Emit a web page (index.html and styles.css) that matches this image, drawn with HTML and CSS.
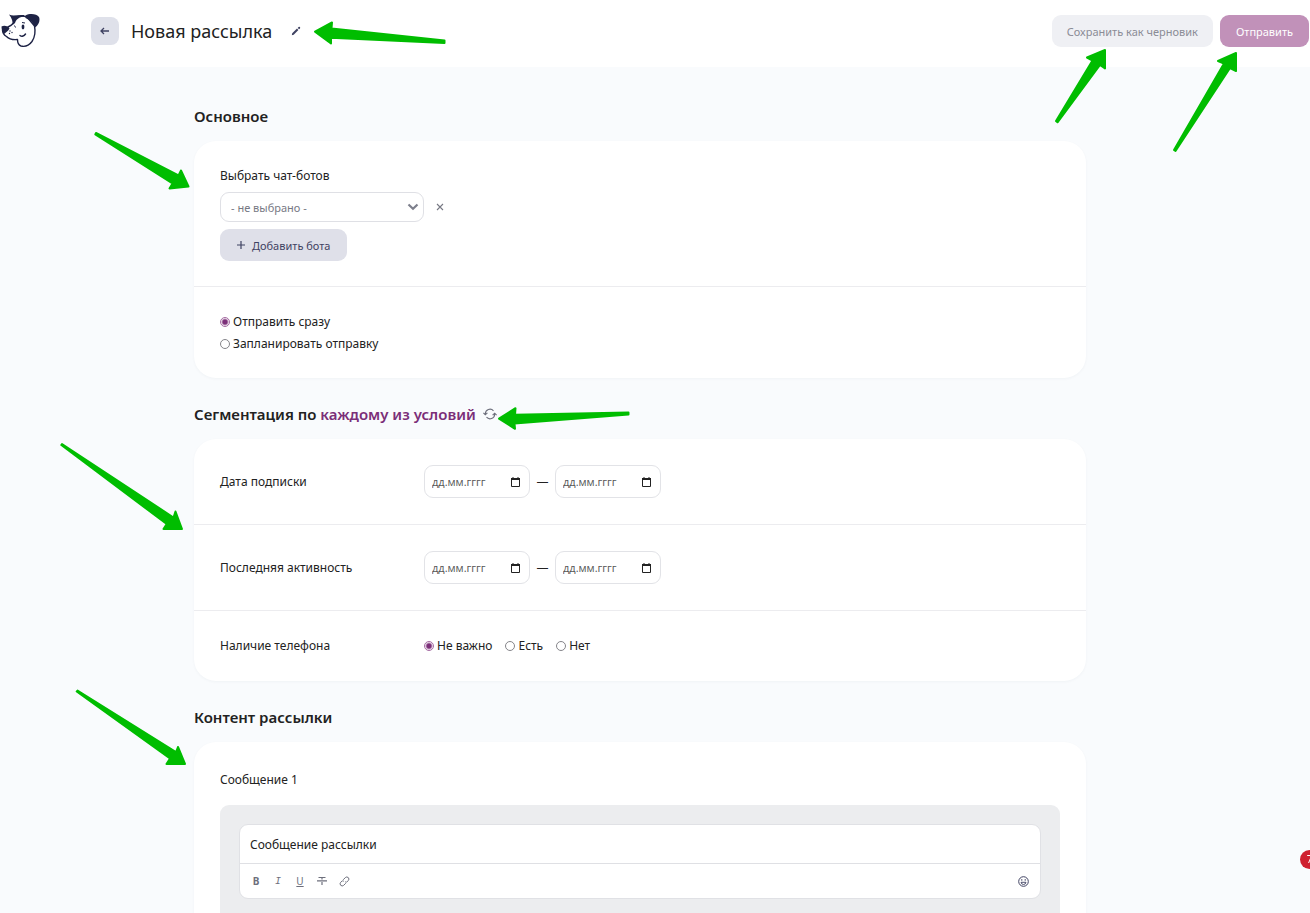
FILE: index.html
```html
<!DOCTYPE html>
<html lang="ru">
<head>
<meta charset="utf-8">
<meta name="viewport" content="width=device-width, initial-scale=1">
<title>Новая рассылка</title>
<link rel="stylesheet" href="styles.css">
</head>
<body>
<header class="header">
  <a href="#" class="logo" aria-label="На главную">
    <svg width="40" height="36" viewBox="0 0 40 36">
      <path d="M14 5 C18 3 23 2.500 27 4 L34.500 13 C35.500 18 35 24 32 28.500 C29 32.500 25 34 21 33 C18 32 17.500 30 17.500 26.500 C13 27 9 26 6.500 23.500 C4 22 2.500 20 2.500 17 L8 14 C10 13 12 12 13.500 10 Z" fill="#fff" stroke="#1e2345" stroke-width="1.4" stroke-linejoin="round"/>
      <path d="M9 1.500 C13 3.500 18 1.500 24 2 L24 3.500 C19 4 16 6.500 15 10 L12.500 12 C13 9 12 5 9 1.500 Z" fill="#1e2345"/>
      <path d="M25.500 2.500 C30 0 37 1 39 4 C40.500 8 38.500 12 35 14.500 C33.500 10 30.500 7 25.500 5 Z" fill="#1e2345"/>
      <path d="M1.500 13.500 C4 12 8.500 13 9.500 15.500 C8 18.500 5.500 19.500 4 21 C2.500 19.500 1.500 16.500 1.500 13.500 Z" fill="#1e2345"/>
      <ellipse cx="23" cy="14" rx="1.400" ry="2.400" fill="#1e2345"/>
      <path d="M22 9.500 L25 10 M14.500 12.500 L15.500 14.500" stroke="#1e2345" fill="none"/>
      <path d="M20 22.500 C22 24 24 23 25.500 21" stroke="#1e2345" stroke-width="1.5" fill="none" stroke-linecap="round"/>
      <circle cx="10" cy="18" r=".7" fill="#1e2345"/>
      <circle cx="12" cy="19.500" r=".7" fill="#1e2345"/>
      <circle cx="9.500" cy="20.500" r=".7" fill="#1e2345"/>
    </svg>
  </a>
  <button type="button" class="back" aria-label="Назад">
    <svg width="10" height="8" viewBox="0 0 10 8"><path d="M9 4 H1 M4 1 L1 4 L4 7" fill="none" stroke="#3f4262" stroke-width="1.3"/></svg>
  </button>
  <h1 class="title">Новая рассылка</h1>
  <button type="button" class="icon-btn edit" aria-label="Переименовать">
    <svg width="10" height="10" viewBox="0 0 10 10"><path d="M.8 9.200 L1.200 7.300 L6 2.600 L7.400 4 L2.700 8.700 Z M6.700 1.900 L7.600 1 Q8.300 .5 8.900 1.100 Q9.500 1.700 9 2.400 L8.100 3.300 Z" fill="#3f4262"/></svg>
  </button>
  <div class="header-right">
    <button type="button" class="btn draft">Сохранить как черновик</button>
    <button type="button" class="btn send">Отправить</button>
  </div>
</header>

<main class="main">
  <div class="container">

    <h2 class="heading">Основное</h2>
    <section class="card">
      <div class="card-part">
        <label class="label" for="bot">Выбрать чат-ботов</label>
        <div class="bot-row">
          <div class="select-wrap">
            <select id="bot" class="select">
              <option>- не выбрано -</option>
            </select>
            <svg class="chevron" width="12" height="8" viewBox="0 0 12 8"><path d="M1.500 1.500 L6 5.700 L10.500 1.500" fill="none" stroke="#7d7f8c" stroke-width="2.200"/></svg>
          </div>
          <button type="button" class="icon-btn" aria-label="Удалить">
            <svg width="8" height="8" viewBox="0 0 8 8"><path d="M1 1 L7 7 M7 1 L1 7" stroke="#777984" stroke-width="1.1"/></svg>
          </button>
        </div>
        <button type="button" class="btn add">
          <svg width="8" height="8" viewBox="0 0 8 8"><path d="M4 0 V8 M0 4 H8" stroke="#3f4262" stroke-width="1.2"/></svg>
          Добавить бота
        </button>
      </div>
      <div class="card-part when">
        <label class="radio"><input type="radio" name="when" checked>Отправить сразу</label>
        <label class="radio"><input type="radio" name="when">Запланировать отправку</label>
      </div>
    </section>

    <h2 class="heading">Сегментация по <a href="#" class="mode">каждому из условий</a>
      <svg class="refresh" width="14" height="12" viewBox="0 0 14 12"><path d="M2.300 6.500 V5.800 A4.700 4.700 0 0 1 10.500 2.800 M11.700 5.500 V6.200 A4.700 4.700 0 0 1 3.500 9.200 M.4 4.800 L2.300 6.800 L4.400 4.800 M9.600 7.200 L11.700 5.200 L13.600 7.200" fill="none" stroke="#6d6f7c" stroke-width="1.1"/></svg>
    </h2>
    <section class="card">
      <div class="row">
        <label class="row-name" for="sub-from">Дата подписки</label>
        <div class="dates">
          <div class="date">
            <input type="text" id="sub-from" placeholder="дд.мм.гггг">
            <button type="button" class="icon-btn" aria-label="Календарь"><svg width="9" height="10" viewBox="0 0 9 10"><path d="M.5 1.500 H8.500 V9.500 H.5 Z" fill="none" stroke="#222"/><path d="M0 1 H9 V3 H0 Z M1.500 0 H2.500 V1 H1.500 Z M6.500 0 H7.500 V1 H6.500 Z" fill="#222"/></svg></button>
          </div>
          <span class="dash">—</span>
          <div class="date">
            <input type="text" aria-label="Дата подписки до" placeholder="дд.мм.гггг">
            <button type="button" class="icon-btn" aria-label="Календарь"><svg width="9" height="10" viewBox="0 0 9 10"><path d="M.5 1.500 H8.500 V9.500 H.5 Z" fill="none" stroke="#222"/><path d="M0 1 H9 V3 H0 Z M1.500 0 H2.500 V1 H1.500 Z M6.500 0 H7.500 V1 H6.500 Z" fill="#222"/></svg></button>
          </div>
        </div>
      </div>
      <div class="row">
        <label class="row-name" for="act-from">Последняя активность</label>
        <div class="dates">
          <div class="date">
            <input type="text" id="act-from" placeholder="дд.мм.гггг">
            <button type="button" class="icon-btn" aria-label="Календарь"><svg width="9" height="10" viewBox="0 0 9 10"><path d="M.5 1.500 H8.500 V9.500 H.5 Z" fill="none" stroke="#222"/><path d="M0 1 H9 V3 H0 Z M1.500 0 H2.500 V1 H1.500 Z M6.500 0 H7.500 V1 H6.500 Z" fill="#222"/></svg></button>
          </div>
          <span class="dash">—</span>
          <div class="date">
            <input type="text" aria-label="Последняя активность до" placeholder="дд.мм.гггг">
            <button type="button" class="icon-btn" aria-label="Календарь"><svg width="9" height="10" viewBox="0 0 9 10"><path d="M.5 1.500 H8.500 V9.500 H.5 Z" fill="none" stroke="#222"/><path d="M0 1 H9 V3 H0 Z M1.500 0 H2.500 V1 H1.500 Z M6.500 0 H7.500 V1 H6.500 Z" fill="#222"/></svg></button>
          </div>
        </div>
      </div>
      <div class="row">
        <span class="row-name">Наличие телефона</span>
        <div class="radios">
          <label class="radio"><input type="radio" name="phone" checked>Не важно</label>
          <label class="radio"><input type="radio" name="phone">Есть</label>
          <label class="radio"><input type="radio" name="phone">Нет</label>
        </div>
      </div>
    </section>

    <h2 class="heading">Контент рассылки</h2>
    <section class="card card-message">
      <label class="label" for="msg">Сообщение 1</label>
      <div class="message">
        <div class="editor">
          <textarea id="msg" class="editor-text" rows="1">Сообщение рассылки</textarea>
          <div class="toolbar">
            <button type="button" class="icon-btn tool bold">B</button>
            <button type="button" class="icon-btn tool italic">I</button>
            <button type="button" class="icon-btn tool underline">U</button>
            <button type="button" class="icon-btn tool strike" aria-label="Зачёркнутый">
              <svg width="10" height="10" viewBox="0 0 10 10"><path d="M1.500 1.500 H8.500 M5 1.500 V3.500 M5 6 V9 M0 4.800 H10" fill="none" stroke="#6d6f7c" stroke-width="1.2"/></svg>
            </button>
            <button type="button" class="icon-btn tool" aria-label="Ссылка">
              <svg width="11" height="11" viewBox="0 0 11 11"><path d="M4.200 5.800 Q3.400 4.600 4.400 3.600 L6.400 1.500 Q7.800 .3 9.300 1.600 Q10.600 3.100 9.400 4.500 L8 5.800 M6.800 5.200 Q7.600 6.400 6.600 7.400 L4.600 9.400 Q3.200 10.600 1.700 9.300 Q.4 7.800 1.600 6.400 L3 5.100" fill="none" stroke="#6d6f7c"/></svg>
            </button>
            <button type="button" class="icon-btn tool smile" aria-label="Эмодзи">
              <svg width="11" height="11" viewBox="0 0 11 11"><circle cx="5.500" cy="5.500" r="4.800" fill="none" stroke="#3f4262"/><path d="M3.800 3 V4.800 M7.200 3 V4.800 M3 6.300 H8 Q7.600 8.500 5.500 8.500 Q3.400 8.500 3 6.300 Z" fill="none" stroke="#3f4262" stroke-width=".9"/></svg>
            </button>
          </div>
        </div>
      </div>
    </section>

  </div>
</main>

<div class="badge">7</div>

<!-- pointers over the page -->
<svg class="arrows" width="1310" height="913" viewBox="0 0 1310 913" aria-hidden="true">
  <path d="M315 31.700 L332 22.500 L331.500 28.500 L444.500 40.500 L444.500 43 L331 37.700 L331 43.500 Z"/>
  <path d="M1105 50 L1087 57.500 L1092.500 60.500 L1056 121 L1057.500 122.300 L1100 65 L1105 68.500 Z"/>
  <path d="M1236 53 L1218 61 L1224 63.500 L1174 150 L1175.500 151 L1230 68 L1236 71 Z"/>
  <path d="M188.500 186.500 L181 170.500 L178.500 175.500 L96 133 L95.300 134.500 L172.500 183.500 L169.500 188.500 Z"/>
  <path d="M499 418.700 L515.500 408.200 L515 414.800 L628.500 412.500 L628.500 414.500 L514.500 423.500 L515 428.800 Z"/>
  <path d="M182 529 L175.500 511.500 L173.500 517.500 L62 444 L61.300 445 L166.700 524 L163.500 529 Z"/>
  <path d="M185 764 L178 747 L176 752 L77.500 690.500 L76.700 691.500 L170 758.500 L166.500 764 Z"/>
</svg>
</body>
</html>
```
FILE: styles.css
```css
* {
  box-sizing: border-box;
}

body {
  margin: 0;
  background: #f9fbfd;
  color: #222;
  font-family: "Noto Sans", "Open Sans", sans-serif;
  font-size: 12px;
  line-height: 20px;
}

button, input, select, textarea {
  font-family: inherit;
  font-size: 12px;
  color: inherit;
}

button {
  cursor: pointer;
}

/* header */
.header {
  display: flex;
  align-items: center;
  height: 67px;
  padding: 0 1px 5px 0;
  background: #fff;
}

.logo {
  width: 91px;
}

.logo svg {
  display: block;
}

.back {
  display: flex;
  align-items: center;
  justify-content: center;
  width: 28px;
  height: 28px;
  padding: 0;
  border: 0;
  border-radius: 8px;
  background: #dfe1ea;
}

.title {
  margin: 0 19px 0 12px;
  font-size: 18px;
  font-weight: 400;
  line-height: 28px;
}

.icon-btn {
  display: flex;
  align-items: center;
  justify-content: center;
  padding: 0;
  border: 0;
  background: none;
}

.header-right {
  display: flex;
  gap: 7px;
  margin-left: auto;
}

.btn {
  height: 32px;
  padding: 0 15px;
  border: 0;
  border-radius: 9px;
  font-size: 11px;
}

.draft {
  background: #eff0f4;
  color: #8b8c96;
}

.send {
  padding: 0 16px;
  background: #c191b9;
  color: #fff;
}

/* content */
.main {
  padding: 37px 30px 0 0;
}

.container {
  max-width: 892px;
  margin: 0 auto;
}

.heading {
  margin: 0 0 13px;
  font-size: 15px;
  font-weight: 600;
  line-height: 24px;
}

.mode {
  color: #7b2e78;
  text-decoration: none;
}

.refresh {
  margin-left: 3px;
}

.card {
  margin-bottom: 24px;
  border-radius: 22px;
  background: #fff;
  box-shadow: 0 1px 3px rgba(30, 40, 80, 0.04);
}

.card-part {
  padding: 25px 26px;
}

.when {
  display: flex;
  flex-direction: column;
  align-items: flex-start;
  padding: 24px 26px 23px;
  border-top: 1px solid #ececef;
  line-height: 22px;
}

.label {
  display: block;
  margin-bottom: 6px;
}

.bot-row {
  display: flex;
  gap: 12px;
  margin-bottom: 7px;
}

.select-wrap {
  position: relative;
  width: 204px;
}

.select {
  appearance: none;
  display: block;
  width: 100%;
  height: 30px;
  padding: 0 10px;
  border: 1px solid #dfe0e5;
  border-radius: 9px;
  background: #fff;
  color: #777984;
  font-size: 11px;
}

.chevron {
  position: absolute;
  top: 11px;
  right: 5px;
  pointer-events: none;
}

.add {
  display: flex;
  align-items: center;
  gap: 7px;
  padding: 0 17px;
  background: #dfe0e9;
  color: #3f4262;
}

.radio {
  display: flex;
  align-items: center;
  gap: 3px;
}

.radio input {
  appearance: none;
  width: 10px;
  height: 10px;
  margin: 0;
  border: 1px solid #85858a;
  border-radius: 50%;
  background: #fff;
}

.radio input:checked {
  border-color: #a56ba2;
  background: radial-gradient(circle, #7b2e78 0 2px, #fff 4px);
}

.row {
  display: flex;
  align-items: center;
  padding: 26px;
}

.row + .row {
  border-top: 1px solid #ececef;
}

.row:last-child {
  padding: 25px 26px;
}

.row-name {
  width: 204px;
}

.dates {
  display: flex;
  align-items: center;
  gap: 6px;
}

.date {
  display: flex;
  align-items: center;
  width: 106px;
  height: 33px;
  padding: 0 9px 0 7px;
  border: 1px solid #e2e3e7;
  border-radius: 9px;
}

.date input {
  flex: 1;
  min-width: 0;
  padding: 0;
  border: 0;
  outline: 0;
  background: none;
  font-family: "Open Sans", sans-serif;
  font-size: 11px;
}

.date input::placeholder {
  color: #555;
}

.dash {
  width: 13px;
  text-align: center;
}

.radios {
  display: flex;
  gap: 13px;
}

.card-message {
  padding: 28px 26px;
}

.card-message .label {
  margin-bottom: 15px;
}

.message {
  padding: 19px 19px 40px;
  border-radius: 9px;
  background: #ecedef;
}

.editor {
  border: 1px solid #e0e1e5;
  border-radius: 9px;
  background: #fff;
}

.editor-text {
  display: block;
  width: 100%;
  height: 38px;
  padding: 10px;
  border: 0;
  outline: 0;
  background: none;
  line-height: 20px;
  resize: none;
  overflow: hidden;
}

.toolbar {
  display: flex;
  align-items: center;
  gap: 6px;
  height: 35px;
  padding: 0 9px 0 8px;
  border-top: 1px solid #dfe0e4;
}

.tool {
  width: 16px;
  height: 16px;
  color: #6d6f7c;
  font-size: 10px;
}

.bold {
  font-weight: 700;
}

.italic {
  font-family: "Liberation Mono", monospace;
  font-style: italic;
}

.underline {
  text-decoration: underline;
}

.smile {
  margin-left: auto;
}

.badge {
  position: fixed;
  top: 850px;
  right: -9px;
  width: 19px;
  height: 19px;
  border-radius: 50%;
  background: #cf2030;
  color: #fff;
  font-size: 10px;
  line-height: 19px;
  text-align: center;
}

.arrows {
  position: absolute;
  top: 0;
  left: 0;
  fill: #00bd00;
  stroke: #00bd00;
  stroke-width: 2px;
  stroke-linejoin: round;
  pointer-events: none;
}
```
